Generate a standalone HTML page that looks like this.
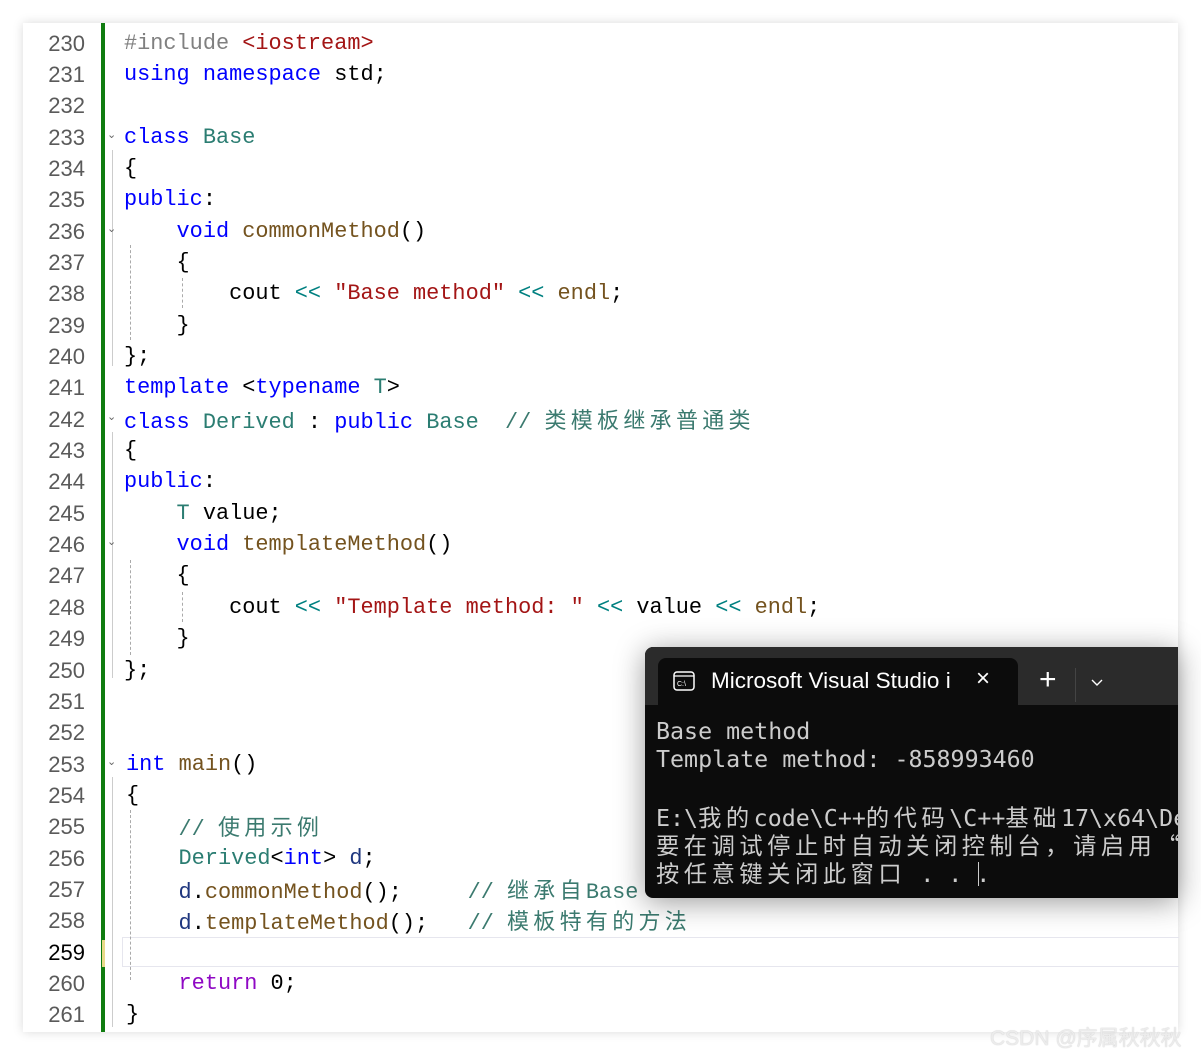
<!DOCTYPE html>
<html><head><meta charset="utf-8"><style>
body{margin:0;width:1201px;height:1055px;background:#fff;position:relative;overflow:hidden;font-family:"Liberation Mono","Noto Sans CJK SC",monospace}
#ed{position:absolute;left:23px;top:23px;width:1155px;height:1009px;background:#fff;box-shadow:0 0 10px rgba(0,0,0,.15)}
#bar{position:absolute;left:101px;top:23px;width:4px;height:1009px;background:#107c10}
.ln{position:absolute;left:23px;width:62px;text-align:right;font-family:"Liberation Sans",sans-serif;font-size:22px;color:#5a5a5a;height:31px;line-height:31px}
.l{position:absolute;left:124px;white-space:pre;font-size:21.9px;height:31px;line-height:31px;color:#000}
.c{font-family:"Noto Sans CJK SC",sans-serif;font-size:22px;letter-spacing:4.3px}
.k{color:#0000ff}.t{color:#2b7d72}.f{color:#74531f}.s{color:#a31515}.g{color:#3b7a6f}.p{color:#808080}.o{color:#008080}.v{color:#1f377f}.r{color:#8f08c4}
.vl{position:absolute;width:0;border-left:1px dashed #aaa}
#con{position:absolute;left:645px;top:647px;width:533px;height:251px;background:#0c0c0c;border-radius:8px 0 0 8px;box-shadow:0 4px 30px rgba(0,0,0,.4);overflow:hidden}
#hd{position:absolute;left:0;top:0;right:0;height:58px;background:#2b2b2b}
#tab{position:absolute;left:13px;top:11px;width:360px;height:48px;background:#0c0c0c;border-radius:8px 8px 0 0}
.cl{position:absolute;left:11px;white-space:pre;color:#ccc;font-size:23.3px;line-height:28px;font-family:"DejaVu Sans Mono","Noto Sans CJK SC",monospace}
.cc{font-family:"Noto Sans CJK SC",sans-serif;letter-spacing:4.5px}
</style></head><body>
<div id="ed"></div><div id="bar"></div>
<div style="position:absolute;left:102px;top:940px;width:3px;height:27px;background:#e8d98a"></div>
<div style="position:absolute;left:122px;top:937px;width:1056px;height:28px;border:1px solid #e6e6ee;border-right:none"></div>
<div class="vl" style="left:112px;top:150px;height:216px;border-left:1px solid #ccc"></div>
<div class="vl" style="left:130px;top:245px;height:95px"></div>
<div class="vl" style="left:182px;top:278px;height:30px"></div>
<div class="vl" style="left:112px;top:432px;height:246px;border-left:1px solid #ccc"></div>
<div class="vl" style="left:130px;top:560px;height:95px"></div>
<div class="vl" style="left:182px;top:592px;height:30px"></div>
<div class="vl" style="left:112px;top:777px;height:250px;border-left:1px solid #ccc"></div>
<div class="vl" style="left:130px;top:810px;height:170px"></div>
<div id="lines"></div>
<script>
var L=[
'<span class="p">#include </span><span class="s">&lt;iostream&gt;</span>',
'<span class="k">using namespace</span> std;',
'',
'<span class="k">class</span> <span class="t">Base</span>',
'{',
'<span class="k">public</span>:',
'    <span class="k">void</span> <span class="f">commonMethod</span>()',
'    {',
'        cout <span class="o">&lt;&lt;</span> <span class="s">"Base method"</span> <span class="o">&lt;&lt;</span> <span class="f">endl</span>;',
'    }',
'};',
'<span class="k">template</span> &lt;<span class="k">typename</span> <span class="t">T</span>&gt;',
'<span class="k">class</span> <span class="t">Derived</span> : <span class="k">public</span> <span class="t">Base</span>  <span class="g">// <span class="c">类模板继承普通类</span></span>',
'{',
'<span class="k">public</span>:',
'    <span class="t">T</span> value;',
'    <span class="k">void</span> <span class="f">templateMethod</span>()',
'    {',
'        cout <span class="o">&lt;&lt;</span> <span class="s">"Template method: "</span> <span class="o">&lt;&lt;</span> value <span class="o">&lt;&lt;</span> <span class="f">endl</span>;',
'    }',
'};','','',
'<span class="k">int</span> <span class="f">main</span>()',
'{',
'    <span class="g">// <span class="c">使用示例</span></span>',
'    <span class="t">Derived</span>&lt;<span class="k">int</span>&gt; <span class="v">d</span>;',
'    <span class="v">d</span>.<span class="f">commonMethod</span>();     <span class="g">// <span class="c">继承自</span>Base</span>',
'    <span class="v">d</span>.<span class="f">templateMethod</span>();   <span class="g">// <span class="c">模板特有的方法</span></span>',
'',
'    <span class="r">return</span> 0;',
'}'];
var h='';
for(var i=0;i<32;i++){var y=27.5+i*31.35;
h+='<div class="ln" style="top:'+y+'px'+(i==29?';color:#000':'')+'">'+(230+i)+'</div><div class="l" style="top:'+y+'px'+(i>=23?';left:126px':'')+'">'+L[i]+'</div>';}
['233','236','242','246','253'].forEach(function(n){var y=27.5+(n-230)*31.35+6;h+='<div style="position:absolute;left:107px;top:'+y+'px;font-size:11px;color:#666;font-family:Liberation Sans">&#8964;</div>';});
document.getElementById('lines').innerHTML=h;
</script>
<div id="con">
<div id="hd"></div>
<div id="tab"></div>
<svg style="position:absolute;left:28px;top:24px" width="22" height="20" viewBox="0 0 22 20"><rect x="1" y="1" width="20" height="18" rx="3" fill="none" stroke="#fff" stroke-width="1.5"/><line x1="1" y1="5" x2="21" y2="5" stroke="#fff" stroke-width="1.3"/><text x="4" y="15" font-size="7" fill="#fff" font-family="Liberation Sans">C:\</text></svg>
<div style="position:absolute;left:66px;top:21px;color:#fff;font-family:'Liberation Sans',sans-serif;font-size:22.5px;white-space:pre">Microsoft Visual Studio <span style="display:inline-block;width:6px;overflow:hidden;vertical-align:bottom">i</span></div>
<div style="position:absolute;left:331px;top:18px;color:#fff;font-family:'Liberation Sans';font-size:24px">&#215;</div>
<div style="position:absolute;left:394px;top:16px;color:#fff;font-family:'Liberation Sans';font-size:30px;font-weight:300">+</div>
<div style="position:absolute;left:430px;top:21px;width:1px;height:34px;background:#444"></div>
<svg style="position:absolute;left:445px;top:31px" width="14" height="10"><path d="M2 2 L7 7 L12 2" fill="none" stroke="#fff" stroke-width="1.4"/></svg>
<div class="cl" style="top:71px">Base method</div>
<div class="cl" style="top:99px">Template method: -858993460</div>
<div class="cl" style="top:155px">E:\<span class="cc">我的</span>code\C++<span class="cc">的代码</span>\C++<span class="cc">基础</span>17\x64\De</div>
<div class="cl" style="top:183px"><span class="cc">要在调试停止时自动关闭控制台，请启用“工</span></div>
<div class="cl" style="top:211px"><span class="cc">按任意键关闭此窗口</span> . . .</div>
<div style="position:absolute;left:333px;top:215px;width:1px;height:24px;background:#ccc"></div>
</div>
<div style="position:absolute;left:990px;top:1022px;font-family:'Liberation Sans','Noto Sans CJK SC',sans-serif;font-size:21px;color:#ececec;text-shadow:0 0 1px #bbb;white-space:nowrap">CSDN @序属秋秋秋</div>
</body></html>
